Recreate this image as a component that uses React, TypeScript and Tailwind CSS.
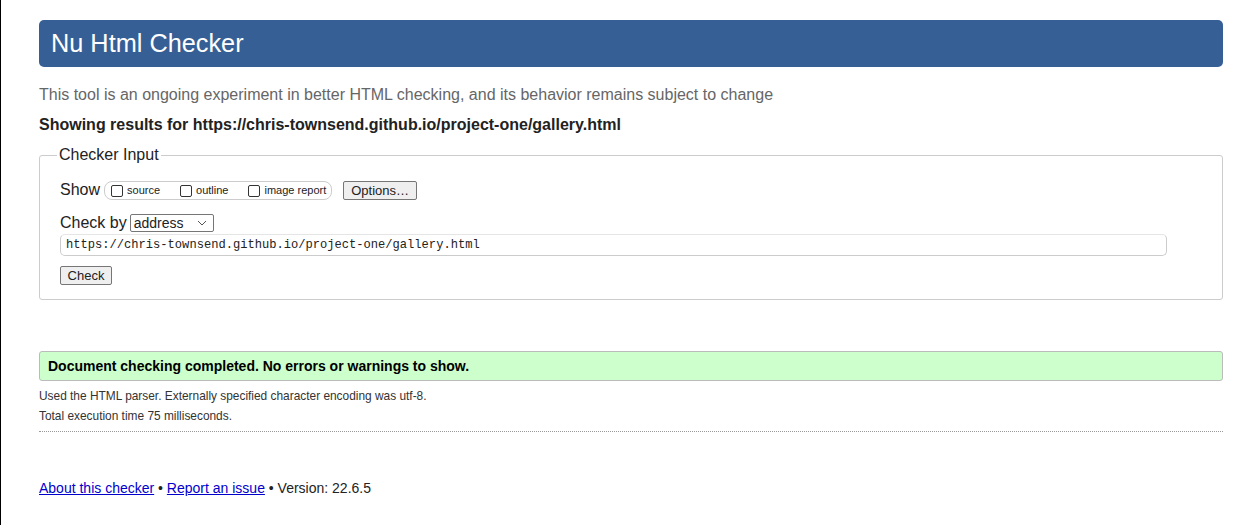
import React from "react";

function Box() {
  return <span className="inline-block w-[12px] h-[12px] border border-[#333] rounded-[2px] bg-white mr-[4px] mt-[1px]" />;
}

export default function App() {
  return (
    <div className="min-h-[525px] border-l border-black bg-white pl-[38px] pr-[18px] pt-[20px] text-[#222] font-['Liberation_Sans',Arial,sans-serif]">
      <div className="h-[47px] rounded-[5px] bg-[#365f95] pl-[12px] flex items-center">
        <h1 className="text-white text-[25.3px] leading-none">Nu Html Checker</h1>
      </div>

      <p className="mt-[19px] text-[16px] leading-[18px] text-[#666]">
        This tool is an ongoing experiment in better HTML checking, and its behavior remains subject to change
      </p>
      <p className="mt-[12px] text-[16px] leading-[18px] font-bold">
        Showing results for https://chris-townsend.github.io/project-one/gallery.html
      </p>

      <fieldset className="mt-[12px] border border-[#ccc] rounded-[3px] pl-[20px] pb-[12px] pt-[16px]">
        <legend className="ml-[-3px] px-[2px] text-[16px] leading-[18px]">Checker Input</legend>

        <div className="flex items-center h-[20px]">
          <span className="text-[16px] mr-[4px]">Show</span>
          <div className="flex items-center h-[19px] border border-[#ccc] rounded-[8px] pl-[6px] pr-[5px] text-[11px] pt-[1px]">
            <Box />
            <span>source</span>
            <span className="w-[20px]" />
            <Box />
            <span>outline</span>
            <span className="w-[20px]" />
            <Box />
            <span>image report</span>
          </div>
          <button className="ml-[11px] h-[19px] px-[7px] text-[13px] leading-none bg-[#efefef] border border-[#767676] rounded-[2px]">
            Options…
          </button>
        </div>

        <div className="flex items-center mt-[14px] h-[18px]">
          <span className="text-[16px] mr-[3px]">Check by</span>
          <div className="w-[84px] h-[18px] border border-[#767676] rounded-[2px] flex items-center justify-between pl-[3px] pr-[6px] text-[14px]">
            <span>address</span>
            <svg width="10" height="6" viewBox="0 0 10 6">
              <path d="M1 1 L5 5 L9 1" fill="none" stroke="#555" strokeWidth="1" />
            </svg>
          </div>
        </div>

        <div className="mt-[2px] w-[1107px] h-[22px] border border-[#ccc] border-t-[#e5e5e5] rounded-[5px] pl-[5px] flex items-center font-['Liberation_Mono','DejaVu_Sans_Mono',monospace] text-[12.1px]">
          https://chris-townsend.github.io/project-one/gallery.html
        </div>

        <button className="mt-[10px] h-[19px] w-[52px] text-[13px] leading-none bg-[#efefef] border border-[#767676] rounded-[2px]">
          Check
        </button>
      </fieldset>

      <div className="mt-[51px] h-[30px] bg-[#ccffcc] border border-[#bbb] rounded-[3px] pl-[8px] flex items-center text-[14px] font-bold text-black">
        Document checking completed. No errors or warnings to show.
      </div>

      <p className="mt-[8px] text-[11.9px] leading-[14px] text-[#333]">
        Used the HTML parser. Externally specified character encoding was utf-8.
      </p>
      <p className="mt-[6px] text-[11.9px] leading-[14px] text-[#333]">Total execution time 75 milliseconds.</p>
      <div className="mt-[8px] border-b border-dotted border-[#999]" />

      <p className="mt-[48px] text-[14px] leading-[16px] text-[#222]">
        <a className="text-[#0000cc] underline" href="#">About this checker</a>
        {" • "}
        <a className="text-[#0000cc] underline" href="#">Report an issue</a>
        {" • Version: 22.6.5"}
      </p>
    </div>
  );
}
